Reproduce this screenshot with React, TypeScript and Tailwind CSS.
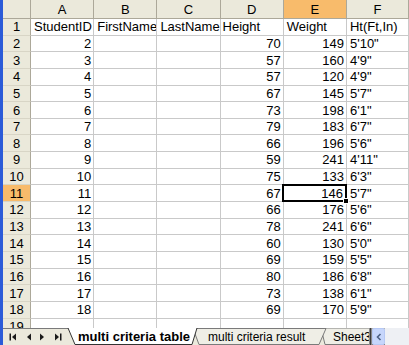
const columns = ["A", "B", "C", "D", "E", "F"];

const heads = ["StudentID", "FirstName", "LastName", "Height", "Weight", "Ht(Ft,In)"];

const students: Array<[number, number, number, string]> = [
  [2, 70, 149, `5'10"`],
  [3, 57, 160, `4'9"`],
  [4, 57, 120, `4'9"`],
  [5, 67, 145, `5'7"`],
  [6, 73, 198, `6'1"`],
  [7, 79, 183, `6'7"`],
  [8, 66, 196, `5'6"`],
  [9, 59, 241, `4'11"`],
  [10, 75, 133, `6'3"`],
  [11, 67, 146, `5'7"`],
  [12, 66, 176, `5'6"`],
  [13, 78, 241, `6'6"`],
  [14, 60, 130, `5'0"`],
  [15, 69, 159, `5'5"`],
  [16, 80, 186, `6'8"`],
  [17, 73, 138, `6'1"`],
  [18, 69, 170, `5'9"`],
];

const cell = "border-r border-b border-[#c9c9c9] flex items-center text-[13px] leading-none text-black whitespace-nowrap overflow-hidden";
const colHead = "border-r border-b border-[#aca899] flex items-center justify-center text-[13px] leading-none text-black";
const rowHead = "border-r border-b border-r-[#aca899] border-b-[#d8d5c6] flex items-center justify-center text-[13px] leading-none text-black";

function RowHeader({ n }: { n: number }) {
  return (
    <div className={`${rowHead} ${n === 11 ? "bg-[#f8bb6b]" : "bg-[#ebe9db]"}`}>{n}</div>
  );
}

function NavArrow({ dir, end }: { dir: "left" | "right"; end?: boolean }) {
  return (
    <div className="w-[15px] flex items-center justify-center">
      <svg width="8" height="8" viewBox="0 0 8 8">
        {dir === "left" ? (
          <>
            {end && <rect x="0.5" y="0.5" width="1.5" height="7" fill="#1a1a1a" />}
            <polygon points="3,4 7,0.5 7,7.5" fill="#1a1a1a" />
          </>
        ) : (
          <>
            <polygon points="1,0.5 5,4 1,7.5" fill="#1a1a1a" />
            {end && <rect x="6" y="0.5" width="1.5" height="7" fill="#1a1a1a" />}
          </>
        )}
      </svg>
    </div>
  );
}

function TabBar() {
  return (
    <div className="relative h-[17px] flex items-center bg-[#ebe9dc] font-['Liberation_Sans',Arial,sans-serif]">
      {/* tab outlines */}
      <svg className="absolute inset-0" width="406" height="17" viewBox="0 0 406 17">
        <line x1="0" y1="0.5" x2="366" y2="0.5" stroke="#7a7a7a" />
        <polygon points="318,0 400,0 400,16.5 322,16.5" fill="#efeee6" stroke="#7a7a7a" />
        <polygon points="190,0.5 323,0.5 316,16.5 196,16.5" fill="#efeee6" stroke="#7a7a7a" />
        <polygon points="65,0 194,0 189,16.5 72,16.5" fill="#ffffff" />
        <polyline points="65,0 72,16.5 189,16.5 194,0" fill="none" stroke="#333333" />
      </svg>
      <div className="relative flex items-center h-full pl-[2px] w-[62px]">
        <NavArrow dir="left" end />
        <NavArrow dir="left" />
        <NavArrow dir="right" />
        <NavArrow dir="right" end />
      </div>
      <div className="relative ml-[13px] w-[130px] text-[13px] font-bold text-black leading-none whitespace-nowrap">
        multi criteria table
      </div>
      <div className="relative w-[122px] text-[12px] text-black leading-none whitespace-nowrap">
        multi criteria result
      </div>
      <div className="relative w-[39px] pl-[3px] overflow-hidden text-[12px] text-black leading-none whitespace-nowrap">
        Sheet3
      </div>
      <div className="relative w-[3px] h-full bg-[#3c3c3c] border-x border-[#8a8a8a]" />
      <div className="relative w-[13px] h-full bg-[#c6d6fb] border border-[#b6c8f4] rounded-[2px] flex items-center justify-center">
        <svg width="6" height="8" viewBox="0 0 6 8">
          <polyline points="4.5,1 1.5,4 4.5,7" fill="none" stroke="#4d6185" strokeWidth="1.6" />
        </svg>
      </div>
      <div className="relative flex-1 h-full bg-[#eef0f4]" />
    </div>
  );
}

export default function App() {
  return (
    <div className="w-[409px] h-[345px] flex bg-white overflow-hidden font-['Liberation_Sans',Arial,sans-serif]">
      <div className="w-[3px] bg-[#2b5bd8]" />
      <div className="flex-1 flex flex-col">
        <div className="h-[328px] overflow-hidden">
          <div className="grid grid-cols-[28px_repeat(5,63.2px)_1fr] grid-rows-[19px_repeat(19,16.65px)]">
            {/* column headers */}
            <div className="bg-[#ebe9db] border-r border-b border-[#aca899]" />
            {columns.map((c) => (
              <div key={c} className={`${colHead} ${c === "E" ? "bg-[#f8bb6b]" : "bg-[#ebe9db]"}`}>
                {c}
              </div>
            ))}

            {/* row 1 */}
            <RowHeader n={1} />
            {heads.map((h, i) => (
              <div key={h} className={`${cell} ${i === 3 ? "pl-[2px]" : "pl-[3px]"}`}>
                {h}
              </div>
            ))}

            {students.map(([id, height, weight, ft]) => (
              <div key={id} className="contents">
                <RowHeader n={id} />
                <div className={`${cell} justify-end pr-[2px]`}>{id}</div>
                <div className={cell} />
                <div className={cell} />
                <div className={`${cell} justify-end pr-[2px]`}>{height}</div>
                {id === 11 ? (
                  <div className="relative z-10 border-r border-b border-[#c9c9c9] flex items-center justify-end pr-[3px] text-[13px] leading-none text-black">
                    {weight}
                    <div className="absolute -left-[2px] -top-[1px] right-[-1px] bottom-[-1px] border-2 border-black" />
                    <div className="absolute right-[-3px] bottom-[-3px] w-[6px] h-[6px] bg-black border border-white" />
                  </div>
                ) : (
                  <div className={`${cell} justify-end pr-[2px]`}>{weight}</div>
                )}
                <div className={`${cell} pl-[3px]`}>{ft}</div>
              </div>
            ))}

            {/* row 19, cut off by the tab bar */}
            <RowHeader n={19} />
            {columns.map((c) => (
              <div key={c} className={cell} />
            ))}
          </div>
        </div>
        <TabBar />
      </div>
    </div>
  );
}
